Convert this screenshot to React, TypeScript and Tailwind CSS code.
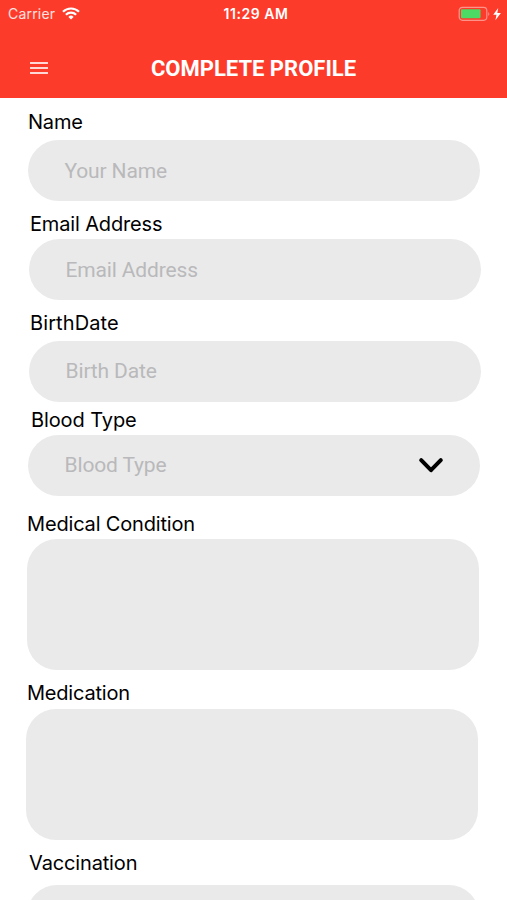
type FieldProps = {
  label: string;
  placeholder?: string;
  kind?: "input" | "select" | "area";
  labelClassName: string;
  boxClassName: string;
};

const fields: FieldProps[] = [
  {
    label: "Name",
    placeholder: "Your Name",
    labelClassName: "mt-[12px] ml-[28px] tracking-[-0.2px]",
    boxClassName: "mt-[6px] ml-[28px] pt-px",
  },
  {
    label: "Email Address",
    placeholder: "Email Address",
    labelClassName: "mt-[11px] ml-[30px] tracking-[-0.15px]",
    boxClassName: "mt-[3px] ml-[29px] pt-px",
  },
  {
    label: "BirthDate",
    placeholder: "Birth Date",
    labelClassName: "mt-[11px] ml-[30px] tracking-[0.1px]",
    boxClassName: "mt-[6px] ml-[29px]",
  },
  {
    label: "Blood Type",
    placeholder: "Blood Type",
    kind: "select",
    labelClassName: "mt-[6px] ml-[31px] tracking-[-0.1px]",
    boxClassName: "mt-[3px] ml-[28px]",
  },
  {
    label: "Medical Condition",
    kind: "area",
    labelClassName: "mt-[16px] ml-[27px] tracking-[-0.17px]",
    boxClassName: "mt-[3px] ml-[27px]",
  },
  {
    label: "Medication",
    kind: "area",
    labelClassName: "mt-[11px] ml-[27px] tracking-[-0.2px]",
    boxClassName: "mt-[4px] ml-[26px]",
  },
  {
    label: "Vaccination",
    kind: "area",
    labelClassName: "mt-[11px] ml-[29px] tracking-[-0.15px]",
    boxClassName: "mt-[10px] ml-[27px]",
  },
];

function StatusBar() {
  return (
    <div className="grid h-[28px] grid-cols-[1fr_auto_1fr] items-center px-[8px] font-['Inter','Liberation_Sans',sans-serif] text-white">
      <div className="flex items-center gap-[7px]">
        <span className="text-[14px] leading-[20px] tracking-[0.2px] text-white/85">Carrier</span>
        <svg className="mb-[2px]" width="18" height="13" viewBox="0 0 18 13" fill="none" stroke="currentColor" strokeWidth="2.2">
          <path d="M1 4.8a11.3 11.3 0 0 1 16 0" />
          <path d="M3.9 7.7a7.2 7.2 0 0 1 10.2 0" />
          <path d="M9 12.5 6.4 9.9a3.7 3.7 0 0 1 5.2 0Z" fill="currentColor" stroke="none" />
        </svg>
      </div>
      <span className="ml-[5px] text-[14px] leading-[20px] font-semibold tracking-[0.55px]">11:29 AM</span>
      <svg className="mr-[-3px] mb-[1px] justify-self-end" width="44" height="16" viewBox="0 0 44 16">
        <rect x="1.2" y="1.3" width="27.6" height="13" rx="3.2" fill="none" stroke="#fff" strokeOpacity="0.45" strokeWidth="1.2" />
        <rect x="3" y="3.3" width="19.5" height="9" rx="1" fill="#4cd964" />
        <path d="M30.3 5.9q2 1.9 0 4Z" fill="#fff" fillOpacity="0.5" />
        <path d="M40.2 2 35.2 8.8h3.3l-1.1 5.5 5.5-7.3h-3.6Z" fill="#fff" />
      </svg>
    </div>
  );
}

function Header() {
  return (
    <header className="h-[98px] bg-[#fd3b2b]">
      <StatusBar />
      <div className="grid h-[70px] grid-cols-[1fr_auto_1fr] items-center pt-[10px]">
        <button type="button" aria-label="Menu" className="ml-[30px] flex w-[18px] flex-col gap-[3px] text-white">
          <span className="h-[2px] bg-white/80" />
          <span className="h-[2px] bg-white/80" />
          <span className="h-[2px] bg-white/80" />
        </button>
        <h1 className="pt-px font-[Roboto,'Liberation_Sans',sans-serif] text-[22px] leading-[26px] font-bold text-white">
          COMPLETE PROFILE
        </h1>
      </div>
    </header>
  );
}

function Field({ label, placeholder, kind = "input", labelClassName, boxClassName }: FieldProps) {
  return (
    <div className="flex flex-col items-start">
      <label
        className={`h-[24px] font-['Inter','Liberation_Sans',sans-serif] text-[20px] leading-[24px] whitespace-nowrap text-black ${labelClassName}`}
      >
        {label}
      </label>
      {kind === "area" ? (
        <div className={`h-[131px] w-[452px] rounded-[30px] bg-[#eaeaea] ${boxClassName}`} />
      ) : (
        <div
          className={`flex h-[61px] w-[452px] items-center justify-between rounded-full bg-[#eaeaea] pr-[36px] pl-[36.5px] ${boxClassName}`}
        >
          <span className="pb-px font-[Roboto,'Liberation_Sans',sans-serif] text-[21px] leading-[26px] tracking-[-0.15px] text-[#b9b9bb]">
            {placeholder}
          </span>
          {kind === "select" ? (
            <svg
              width="26"
              height="18"
              viewBox="0 0 26 18"
              fill="none"
              stroke="#000"
              strokeWidth="4"
              strokeLinecap="round"
              strokeLinejoin="round"
            >
              <path d="M3.2 3.2 13 13.2 22.8 3.2" />
            </svg>
          ) : null}
        </div>
      )}
    </div>
  );
}

export default function App() {
  return (
    <div className="h-[900px] w-[507px] overflow-hidden bg-white">
      <Header />
      <main>
        {fields.map((field) => (
          <Field key={field.label} {...field} />
        ))}
      </main>
    </div>
  );
}
